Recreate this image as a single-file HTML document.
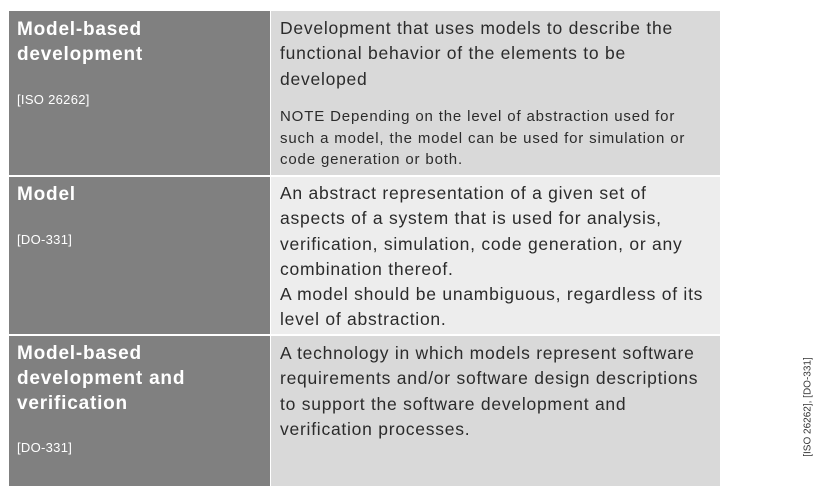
<!DOCTYPE html>
<html><head><meta charset="utf-8"><style>
*{margin:0;padding:0}
body{width:820px;height:489px;background:#fff;position:relative;overflow:hidden;font-family:"Liberation Sans",sans-serif}
.b{position:absolute}
.t{position:absolute;white-space:nowrap;color:#2b2b2b;font-size:17.5px;letter-spacing:0.75px;line-height:25.3px}
.h{position:absolute;white-space:nowrap;color:#fff;font-weight:bold;font-size:19px;letter-spacing:0.8px;line-height:25px}
.r{position:absolute;color:#fff;font-size:13px;letter-spacing:0.3px}
.n{position:absolute;white-space:nowrap;color:#2b2b2b;font-size:15px;letter-spacing:0.85px;line-height:21.5px}
</style></head><body>
<div class="b" style="left:9px;top:11px;width:261px;height:164px;background:#808080"></div>
<div class="b" style="left:271px;top:11px;width:449px;height:164px;background:#d9d9d9"></div>
<div class="b" style="left:9px;top:177px;width:261px;height:157px;background:#808080"></div>
<div class="b" style="left:271px;top:177px;width:449px;height:157px;background:#ededed"></div>
<div class="b" style="left:9px;top:336px;width:261px;height:150px;background:#808080"></div>
<div class="b" style="left:271px;top:336px;width:449px;height:150px;background:#d9d9d9"></div>

<div class="h" style="left:17px;top:17px">Model-based<br>development</div>
<div class="r" style="left:17px;top:92px">[ISO 26262]</div>
<div class="t" style="left:280px;top:16px">Development that uses models to describe the<br>functional behavior of the elements to be<br>developed</div>
<div class="n" style="left:280px;top:106px">NOTE Depending on the level of abstraction used for<br>such a model, the model can be used for simulation or<br>code generation or both.</div>

<div class="h" style="left:17px;top:182px">Model</div>
<div class="r" style="left:17px;top:232px">[DO-331]</div>
<div class="t" style="left:280px;top:181px">An abstract representation of a given set of<br>aspects of a system that is used for analysis,<br>verification, simulation, code generation, or any<br>combination thereof.<br>A model should be unambiguous, regardless of its<br>level of abstraction.</div>

<div class="h" style="left:17px;top:341px">Model-based<br>development and<br>verification</div>
<div class="r" style="left:17px;top:440px">[DO-331]</div>
<div class="t" style="left:280px;top:341px">A technology in which models represent software<br>requirements and/or software design descriptions<br>to support the software development and<br>verification processes.</div>

<div style="position:absolute;left:808px;top:407px;transform:translate(-50%,-50%) rotate(-90deg);white-space:nowrap;font-size:10px;color:#333">[ISO 26262], [DO-331]</div>
</body></html>
